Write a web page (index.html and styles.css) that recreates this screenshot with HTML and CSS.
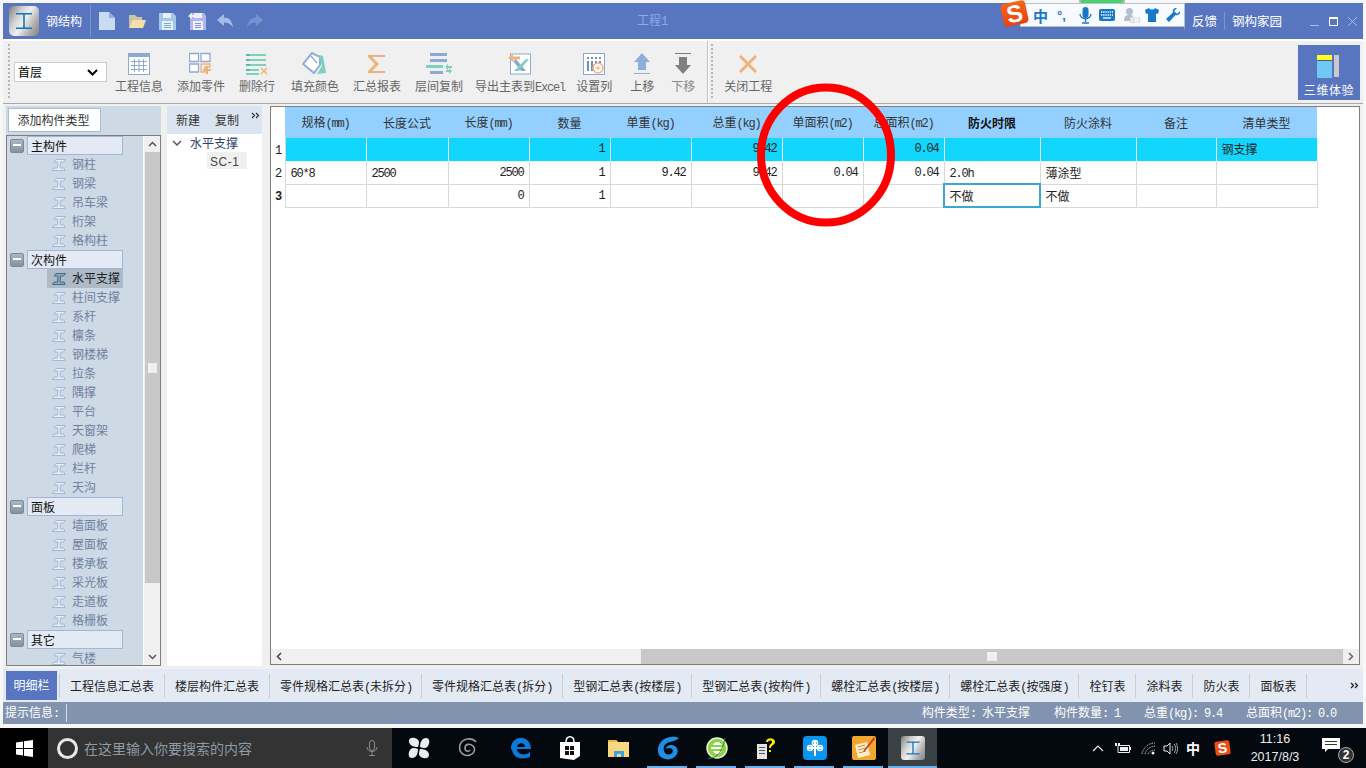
FILE: index.html
```html
<!DOCTYPE html>
<html lang="zh-CN">
<head>
<meta charset="utf-8">
<title>钢结构</title>
<link rel="stylesheet" href="styles.css">
</head>
<body>
<svg class="defs" width="0" height="0">
  <symbol id="beam" viewBox="0 0 14 12">
    <path d="M4 .5h9.500l-2 2.500H8.500l-.5 6H12l1 2.500H.5l1.500-2.500h3.500l.5-6H2z" fill="#e4ecf6" stroke="#a4b8d4" stroke-width="1"/>
  </symbol>
  <symbol id="beamdark" viewBox="0 0 14 12">
    <path d="M4 .5h9.500l-2 2.500H8.500l-.5 6H12l1 2.500H.5l1.500-2.500h3.500l.5-6H2z" fill="#8fa6bb" stroke="#3f6a8c" stroke-width="1"/>
  </symbol>
</svg>

<div class="window">
  <header class="titlebar">
    <div class="tb-left">
      <div class="logo"><svg width="22" height="22" viewBox="0 0 22 22"><path d="M3 3h16v1.500h-7.200v13H19V19H3v-1.500h7.200v-13H3z" fill="#1277bd"/></svg></div>
      <span class="appname">钢结构</span>
      <i class="tb-sep"></i>
      <svg class="qa" width="16" height="18" viewBox="0 0 16 18"><path d="M0 0h10l6 6v12H0z" fill="#c9dcf3"/><path d="M10 0v6h6z" fill="#8fb0de"/></svg>
      <svg class="qa" width="18" height="16" viewBox="0 0 18 16"><path d="M1 2h6l2 2h5v3H4L1 15z" fill="#c9c6a6"/><path d="M4 7h14l-3 8H1z" fill="#f4dfa8"/></svg>
      <svg class="qa" width="17" height="17" viewBox="0 0 17 17"><path d="M0 0h14l3 3v14H0z" fill="#a3c7e8"/><path d="M4 0h8v5H4z" fill="#e6f0fa"/><path d="M3 8h11v9H3z" fill="#e6f0fa"/><path d="M5 10h7v1H5zm0 2h7v1H5zm0 2h7v1H5z" fill="#7fa6d0"/></svg>
      <svg class="qa" width="18" height="17" viewBox="0 0 18 17"><path d="M2 0h14l2 3v14H2z" fill="#b4b4ea"/><path d="M6 0h8v5H6z" fill="#eef0fb"/><path d="M5 8h10v9H5z" fill="#eef0fb"/><path d="M7 10h6v1H7zm0 2h6v1H7zm0 2h6v1H7z" fill="#8d8dd0"/><path d="M0 3l4-3v2h3v2H4v2z" fill="#eef0fb"/></svg>
      <svg class="qa" width="16" height="14" viewBox="0 0 16 14"><path d="M7 0v3.500c5 0 8 3 9 10-2-3.500-5-5-9-5V12L0 6z" fill="#a6bce8"/></svg>
      <svg class="qa" width="16" height="14" viewBox="0 0 16 14"><path d="M9 0v3.500c-5 0-8 3-9 10 2-3.500 5-5 9-5V12l7-6z" fill="#7591d2"/></svg>
    </div>
    <div class="tb-title">工程<span class="l">1</span></div>
    <div class="tb-right">
      <i class="tb-sep2"></i>
      <span class="tb-link">反馈</span>
      <i class="tb-sep2"></i>
      <span class="tb-link">钢构家园</span>
      <div class="winctl">
        <svg width="9" height="9" viewBox="0 0 9 9"><path d="M0 8h9v1H0z" fill="#a8bce8"/></svg>
        <svg width="9" height="9" viewBox="0 0 9 9"><path d="M.5 1.500h8v7h-8z" fill="none" stroke="#fff"/><path d="M0 0h9v2H0z" fill="#fff"/></svg>
        <svg width="9" height="9" viewBox="0 0 9 9"><path d="M0 0l9 9M9 0L0 9" stroke="#a8bce8" stroke-width="1"/></svg>
      </div>
    </div>
  </header>

  <section class="toolbar">
    <i class="grip"></i>
    <div class="floor-select"><span>首层</span><svg width="11" height="7" viewBox="0 0 11 7"><path d="M1 1l4.500 4.500L10 1" fill="none" stroke="#000" stroke-width="2"/></svg></div>
    <div class="tools">
      <div class="tool">
        <svg width="22" height="22" viewBox="0 0 22 22"><rect x=".5" y=".5" width="21" height="21" fill="#fff" stroke="#8ea9d3"/><path d="M1 1h20v3H1z" fill="#8ea9d3"/><path d="M6.500 6v13M11 6v13M15.500 6v13M3 8.500h16M3 12.500h16M3 16.500h16" stroke="#8ea9d3"/></svg>
        <span>工程信息</span>
      </div>
      <div class="tool g14">
        <svg width="24" height="22" viewBox="0 0 24 22"><path d="M.5.500h9v8h-9zM12 .5h9v8h-9zM.5 11h9v8h-9z" fill="#fff" stroke="#8ea9d3" stroke-width="1.300"/><path d="M12 11h9v3h-5v5h-4z" fill="none" stroke="#efb27a" stroke-width="1.300"/><path d="M18 13v8M14 17h8" stroke="#efb27a" stroke-width="2"/></svg>
        <span>添加零件</span>
      </div>
      <div class="tool g14">
        <svg width="22" height="22" viewBox="0 0 22 22"><path d="M0 1h20v2H0zM0 6h20v2H0zM0 11h20v2H0zM0 16h13v2H0zM0 20h13v2H0z" fill="#7dd1bf"/><path d="M0 1h4v2H0zM0 6h4v2H0zM0 11h4v2H0zM0 16h4v2H0z" fill="#5bb8a6"/><path d="M15 15l6 6M21 15l-6 6" stroke="#efb27a" stroke-width="1.500"/></svg>
        <span>删除行</span>
      </div>
      <div class="tool g16">
        <svg width="26" height="24" viewBox="0 0 26 24"><path d="M10 1L1 12l11 9 6-8V5z" fill="#fff" stroke="#92afd8" stroke-width="2"/><path d="M9 4l6 7" stroke="#92afd8" stroke-width="1.500"/><path d="M17 3l4 1 3 17-9 1 5-8z" fill="#7dd1bf"/></svg>
        <span>填充颜色</span>
      </div>
      <div class="tool g14">
        <svg width="20" height="22" viewBox="0 0 20 22"><path d="M1 2h17v2H5l7 7-7 7h13v2H1v-2l7-7-7-7z" fill="#efb27a"/></svg>
        <span>汇总报表</span>
      </div>
      <div class="tool g14">
        <svg width="26" height="22" viewBox="0 0 26 22"><path d="M4 0h17v3H4zM4 6h17v3H4zM4 18h13v3H4z" fill="#8ea9d3"/><path d="M0 12h17v3H0z" fill="#7dd1bf"/><path d="M19 14l3-3v2h4v2h-4v2zM26 18l-3-3v2h-3v2h3v2z" fill="#7dd1bf"/></svg>
        <span>层间复制</span>
      </div>
      <div class="tool g12">
        <svg width="24" height="22" viewBox="0 0 24 22"><rect x="2.500" y="1" width="20" height="20" fill="#fff" stroke="#8ea9d3"/><path d="M8 6l10 12h-5L5 8z" fill="#8ea9d3"/><path d="M18 6h3L11 18H6z" fill="#7dd1bf"/><path d="M0 5l5-4v2.500h7v3H5V9z" fill="#efb27a"/></svg>
        <span>导出主表到<span class="l">Excel</span></span>
      </div>
      <div class="tool g11">
        <svg width="22" height="22" viewBox="0 0 22 22"><rect x=".5" y=".5" width="21" height="21" fill="#fff" stroke="#8ea9d3"/><path d="M4 4h2v2H4zM8 4h2v2H8zM12 4h2v2h-2zM16 4h2v2h-2zM4 8h2v10H4zM8 8h2v10H8zM12 8h2v4h-2zM16 8h2v2h-2z" fill="#6f8fc0"/><circle cx="15" cy="15" r="5" fill="#fff" stroke="#efb27a" stroke-width="1.500"/><path d="M15 12.500v5M12.500 15h5" stroke="#efb27a"/></svg>
        <span>设置列</span>
      </div>
      <div class="tool g18">
        <svg width="18" height="22" viewBox="0 0 18 22"><path d="M9 0l8 9h-4v8H5V9H1zM1 20h16v1H1z" fill="#8eafdb"/></svg>
        <span>上移</span>
      </div>
      <div class="tool g17">
        <svg width="18" height="22" viewBox="0 0 18 22"><path d="M1 0h16v1H1zM5 4h8v8h4l-8 9-8-9h4z" fill="#808080"/></svg>
        <span class="dim">下移</span>
      </div>
      <i class="tool-sep"></i>
      <i class="grip grip2"></i>
      <div class="tool close-tool">
        <svg width="18" height="18" viewBox="0 0 18 18"><path d="M1 1l16 16M17 1L1 17" stroke="#efb27a" stroke-width="3"/></svg>
        <span>关闭工程</span>
      </div>
    </div>
    <div class="btn3d">
      <svg width="24" height="23" viewBox="0 0 24 23"><path d="M0 0h15v5H0z" fill="#ffff1e"/><path d="M0 5h15v1H0z" fill="#4a5a8a"/><path d="M0 6h15v17H0z" fill="#72c8f5"/><path d="M17 0h5v22h-5z" fill="#c9c9c9"/></svg>
      <span>三维体验</span>
    </div>
  </section>

  <main class="main">
    <aside class="left">
      <div class="left-top"><div class="add-type">添加构件类型</div></div>
      <div class="tree">
        <div class="tree-rows">
          <div class="grp"><b class="minus"></b><span class="grp-label">主构件</span></div>
          <div class="it"><svg width="14" height="12"><use href="#beam"/></svg><span>钢柱</span></div>
          <div class="it"><svg width="14" height="12"><use href="#beam"/></svg><span>钢梁</span></div>
          <div class="it"><svg width="14" height="12"><use href="#beam"/></svg><span>吊车梁</span></div>
          <div class="it"><svg width="14" height="12"><use href="#beam"/></svg><span>桁架</span></div>
          <div class="it"><svg width="14" height="12"><use href="#beam"/></svg><span>格构柱</span></div>
          <div class="grp"><b class="minus"></b><span class="grp-label">次构件</span></div>
          <div class="it sel"><svg width="14" height="12"><use href="#beamdark"/></svg><span>水平支撑</span></div>
          <div class="it"><svg width="14" height="12"><use href="#beam"/></svg><span>柱间支撑</span></div>
          <div class="it"><svg width="14" height="12"><use href="#beam"/></svg><span>系杆</span></div>
          <div class="it"><svg width="14" height="12"><use href="#beam"/></svg><span>檩条</span></div>
          <div class="it"><svg width="14" height="12"><use href="#beam"/></svg><span>钢楼梯</span></div>
          <div class="it"><svg width="14" height="12"><use href="#beam"/></svg><span>拉条</span></div>
          <div class="it"><svg width="14" height="12"><use href="#beam"/></svg><span>隅撑</span></div>
          <div class="it"><svg width="14" height="12"><use href="#beam"/></svg><span>平台</span></div>
          <div class="it"><svg width="14" height="12"><use href="#beam"/></svg><span>天窗架</span></div>
          <div class="it"><svg width="14" height="12"><use href="#beam"/></svg><span>爬梯</span></div>
          <div class="it"><svg width="14" height="12"><use href="#beam"/></svg><span>栏杆</span></div>
          <div class="it"><svg width="14" height="12"><use href="#beam"/></svg><span>天沟</span></div>
          <div class="grp"><b class="minus"></b><span class="grp-label">面板</span></div>
          <div class="it"><svg width="14" height="12"><use href="#beam"/></svg><span>墙面板</span></div>
          <div class="it"><svg width="14" height="12"><use href="#beam"/></svg><span>屋面板</span></div>
          <div class="it"><svg width="14" height="12"><use href="#beam"/></svg><span>楼承板</span></div>
          <div class="it"><svg width="14" height="12"><use href="#beam"/></svg><span>采光板</span></div>
          <div class="it"><svg width="14" height="12"><use href="#beam"/></svg><span>走道板</span></div>
          <div class="it"><svg width="14" height="12"><use href="#beam"/></svg><span>格栅板</span></div>
          <div class="grp"><b class="minus"></b><span class="grp-label">其它</span></div>
          <div class="it"><svg width="14" height="12"><use href="#beam"/></svg><span>气楼</span></div>
        </div>
        <div class="vscroll">
          <svg class="arrow" width="9" height="6" viewBox="0 0 9 6"><path d="M1 5l3.500-3.500L8 5" fill="none" stroke="#555" stroke-width="1.500"/></svg>
          <div class="vthumb"><i></i></div>
          <svg class="arrow" width="9" height="6" viewBox="0 0 9 6"><path d="M1 1l3.500 3.500L8 1" fill="none" stroke="#555" stroke-width="1.500"/></svg>
        </div>
      </div>
    </aside>

    <aside class="mid">
      <div class="mid-top"><span>新建</span><span>复制</span><svg width="9" height="7" viewBox="0 0 9 7"><path d="M1 1l2.500 2.500L1 6M5 1l2.500 2.500L5 6" fill="none" stroke="#333" stroke-width="1.200"/></svg></div>
      <div class="mid-tree">
        <div class="mid-root"><svg width="10" height="7" viewBox="0 0 10 7"><path d="M1 1l4 4 4-4" fill="none" stroke="#555" stroke-width="1.500"/></svg><span>水平支撑</span></div>
        <div class="mid-leaf"><span>SC-1</span></div>
      </div>
    </aside>

    <section class="grid-panel">
      <div class="grid-body">
        <table class="grid">
          <colgroup><col class="c0"><col class="c1"><col class="c2"><col class="c3"><col class="c4"><col class="c5"><col class="c6"><col class="c7"><col class="c8"><col class="c9"><col class="c10"><col class="c11"><col class="c12"></colgroup>
          <thead>
            <tr><th class="rh"></th><th>规格<span class="l">(mm)</span></th><th>长度公式</th><th>长度<span class="l">(mm)</span></th><th>数量</th><th>单重<span class="l">(kg)</span></th><th>总重<span class="l">(kg)</span></th><th>单面积<span class="l">(m2)</span></th><th>总面积<span class="l">(m2)</span></th><th class="strong">防火时限</th><th>防火涂料</th><th>备注</th><th>清单类型</th></tr>
          </thead>
          <tbody>
            <tr class="hl"><td class="rh"><span class="l">1</span></td><td></td><td></td><td></td><td class="n">1</td><td></td><td class="n">9.42</td><td></td><td class="n">0.04</td><td></td><td></td><td></td><td>钢支撑</td></tr>
            <tr><td class="rh"><span class="l">2</span></td><td><span class="l">60*8</span></td><td><span class="l">2500</span></td><td class="n">2500</td><td class="n">1</td><td class="n">9.42</td><td class="n">9.42</td><td class="n">0.04</td><td class="n">0.04</td><td><span class="l">2.0h</span></td><td>薄涂型</td><td></td><td></td></tr>
            <tr><td class="rh cur"><span class="l">3</span></td><td></td><td></td><td class="n">0</td><td class="n">1</td><td></td><td></td><td></td><td></td><td class="active">不做</td><td>不做</td><td></td><td></td></tr>
          </tbody>
        </table>
      </div>
      <div class="hscroll">
        <svg class="harrow" width="6" height="9" viewBox="0 0 6 9"><path d="M5 1L1.500 4.500 5 8" fill="none" stroke="#444" stroke-width="1.500"/></svg>
        <div class="htrack"><div class="hthumb"><i></i></div></div>
        <svg class="harrow" width="6" height="9" viewBox="0 0 6 9"><path d="M1 1l3.500 3.500L1 8" fill="none" stroke="#666" stroke-width="1.500"/></svg>
      </div>
    </section>
  </main>

  <nav class="tabs">
    <div class="tab on">明细栏</div>
    <div class="tab">工程信息汇总表</div>
    <div class="tab">楼层构件汇总表</div>
    <div class="tab">零件规格汇总表<span class="l">(</span>未拆分<span class="l">)</span></div>
    <div class="tab">零件规格汇总表<span class="l">(</span>拆分<span class="l">)</span></div>
    <div class="tab">型钢汇总表<span class="l">(</span>按楼层<span class="l">)</span></div>
    <div class="tab">型钢汇总表<span class="l">(</span>按构件<span class="l">)</span></div>
    <div class="tab">螺栓汇总表<span class="l">(</span>按楼层<span class="l">)</span></div>
    <div class="tab">螺栓汇总表<span class="l">(</span>按强度<span class="l">)</span></div>
    <div class="tab">栓钉表</div>
    <div class="tab">涂料表</div>
    <div class="tab">防火表</div>
    <div class="tab">面板表</div>
    <svg class="tabs-more" width="9" height="7" viewBox="0 0 9 7"><path d="M1 1l2.500 2.500L1 6M5 1l2.500 2.500L5 6" fill="none" stroke="#222" stroke-width="1.300"/></svg>
  </nav>

  <footer class="status">
    <span class="hint">提示信息<span class="l">:</span></span>
    <i class="status-sep"></i>
    <div class="status-right">
      <span>构件类型<span class="l">: </span>水平支撑</span>
      <span>构件数量<span class="l">: 1</span></span>
      <span>总重<span class="l">(kg): 9.4</span></span>
      <span>总面积<span class="l">(m2): 0.0</span></span>
    </div>
  </footer>
</div>

<div class="taskbar">
  <div class="start"><svg width="17" height="17" viewBox="0 0 17 17"><path d="M0 2.500l7-1v6.500H0zM8 1.300L17 0v8H8zM0 9h7v6.500l-7-1zM8 9h9v8l-9-1.300z" fill="#fff"/></svg></div>
  <div class="search">
    <i class="ring"></i>
    <span>在这里输入你要搜索的内容</span>
    <svg width="12" height="16" viewBox="0 0 12 16"><rect x="3.500" y=".5" width="5" height="10" rx="2.500" fill="none" stroke="#8a8a8a"/><path d="M1 7c0 6 10 6 10 0M6 12v3M3 15.500h6" fill="none" stroke="#8a8a8a"/></svg>
  </div>
  <div class="apps">
    <div class="app"><svg width="22" height="22" viewBox="0 0 22 22"><path d="M10 10C5 10 1 8 1 4s5-4 8-2 2 5 1 8zM12 10c0-5 2-9 6-9s4 5 2 8-5 2-8 1zM12 12c5 0 9 2 9 6s-5 4-8 2-2-5-1-8zM10 12c0 5-2 9-6 9s-4-5-2-8 5-2 8-1z" fill="#e6eef0"/></svg></div>
    <div class="app"><svg width="22" height="22" viewBox="0 0 22 22"><path d="M19 5C15 0 5 1 3 8c-2 7 4 12 10 10 4-1 6-6 3-9s-8-2-8 2 4 4 5 2" fill="none" stroke="#9a9a9a" stroke-width="1.600"/></svg></div>
    <div class="app"><svg width="22" height="22" viewBox="0 0 22 22"><path d="M1 10C2 3 8 0 13 1c5 1 8 6 8 11H7c0 6 9 7 13 3v5c-5 2-12 2-15-1-2-2-3-5-3-7-1 1-1 1-1-2zm6 0h8c0-5-7-5-8 0z" fill="#0c78d7"/></svg></div>
    <div class="app"><svg width="22" height="24" viewBox="0 0 22 24"><path d="M1 6h20v14l-6 4-14-2z" fill="#fff"/><path d="M7 6c0-7 8-7 8 0" fill="none" stroke="#fff" stroke-width="1.500"/><path d="M6 10h4v4H6zM11 10h4v4h-4zM6 15h4v4H6zM11 15h4v4h-4z" fill="#111"/></svg></div>
    <div class="app"><svg width="22" height="20" viewBox="0 0 22 20"><path d="M0 2h8l2 2h11v15H0z" fill="#f7d87e"/><path d="M0 2h8l2 2H0z" fill="#e8b949"/><path d="M6 13h10v6h-3v-3H9v3H6z" fill="#3ba4e4"/></svg></div>
    <div class="app u"><svg width="24" height="24" viewBox="0 0 24 24"><path d="M23 2c-4-2-11-2-16 2C1 9 0 17 5 21c5 4 13 3 16-3 2-5-1-9-6-9-3 0-5 2-5 4 3-2 7-1 7 2s-5 5-8 2c-3-4-1-10 5-11 3-1 6-1 9-4z" fill="#1e8fe6"/></svg></div>
    <div class="app u"><svg width="24" height="24" viewBox="0 0 24 24"><circle cx="12" cy="12" r="10" fill="#8bd24a"/><circle cx="12" cy="12" r="10" fill="none" stroke="#e8f6d6" stroke-width="1.500"/><path d="M6 11h12v2H6zM12 6c3 0 5 2 5 3H8c0-1 2-3 4-3zM8 15h9c-1 2-3 3-5 3s-3-1-4-3z" fill="#fff"/><path d="M3 22c5 1 14-2 17-20" fill="none" stroke="#3a8a22"/></svg></div>
    <div class="app u"><svg width="20" height="22" viewBox="0 0 20 22"><path d="M1 7h10v15H1z" fill="#e4e4e4"/><path d="M3 10h6v1H3zm0 3h6v1H3zm0 3h6v1H3z" fill="#555"/><path d="M10 5c0-5 9-5 9 0 0 3-4 3-4 6h-2c0-4 3-4 3-6s-3-2-4 0zM13 13h2v2h-2z" fill="#ffec00"/></svg></div>
    <div class="app u"><div class="blue-app"><svg width="18" height="18" viewBox="0 0 18 18"><path d="M9 1v16M1 9h16" stroke="#fff" stroke-width="2"/><circle cx="9" cy="4" r="2.500" fill="none" stroke="#fff" stroke-width="1.500"/><circle cx="4" cy="9" r="2.500" fill="none" stroke="#fff" stroke-width="1.500"/><circle cx="14" cy="9" r="2.500" fill="none" stroke="#fff" stroke-width="1.500"/></svg></div></div>
    <div class="app u"><svg width="24" height="24" viewBox="0 0 24 24"><rect width="24" height="24" rx="2" fill="#f0a92e"/><path d="M3 9l12-3 3 13-12 3z" fill="#fbeecf"/><path d="M6 11l7-2M6.500 14l7-2M7 17l7-2" stroke="#c98a2a"/><path d="M22 1L12 14l-1 2 2-1L23 3z" fill="#c0392b"/></svg></div>
    <div class="app u cur-app"><div class="logo small"><svg width="18" height="18" viewBox="0 0 22 22"><path d="M3 3h16v1.500h-7.200v13H19V19H3v-1.500h7.200v-13H3z" fill="#1277bd"/></svg></div></div>
  </div>
  <div class="tray">
    <div class="t w22"><svg width="12" height="7" viewBox="0 0 12 7"><path d="M1 6l5-5 5 5" fill="none" stroke="#eee" stroke-width="1.200"/></svg></div>
    <div class="t w28"><svg width="16" height="11" viewBox="0 0 16 11"><path d="M3 2.500h11.500v7H3z" fill="none" stroke="#eee"/><path d="M5 4h8v4H5zM0 0h2v3H0zM3 0h2v2H3z" fill="#eee"/><path d="M15 4h1v3h-1z" fill="#eee"/></svg></div>
    <div class="t w22"><svg width="15" height="13" viewBox="0 0 15 13"><path d="M1 12C2 6 7 1 14 1M4 12c1-4 4-7 10-8M7 12c1-2 3-4 7-4" fill="none" stroke="#bbb" stroke-dasharray="1.500 1"/><circle cx="12" cy="11" r="1.500" fill="#eee"/></svg></div>
    <div class="t w22"><svg width="15" height="13" viewBox="0 0 15 13"><path d="M1 4h3l3-3v11L4 9H1z" fill="none" stroke="#eee"/><path d="M9 4c1 1 1 4 0 5M11 2c2 2 2 7 0 9M13 1c2 3 2 8 0 11" fill="none" stroke="#aaa"/></svg></div>
    <div class="t w24 ime">中</div>
    <div class="t w34"><span class="sg sg-small">S</span></div>
    <div class="clock"><span>11:16</span><span>2017/8/3</span></div>
    <div class="t w46 notif"><svg width="18" height="14" viewBox="0 0 18 14"><path d="M0 0h18v11H6l-3 3v-3H0z" fill="#fff"/><path d="M3 3h12v1H3zm0 3h12v1H3z" fill="#333"/></svg><b>2</b></div>
  </div>
</div>

<div class="ime-green"></div>
<div class="ime-bar">
  <span class="ime-zh">中</span>
  <span class="ime-punc">°,</span>
  <svg width="13" height="17" viewBox="0 0 13 17"><rect x="3.500" y="0" width="6" height="11" rx="3" fill="#1878c8"/><path d="M1 7c0 6 11 6 11 0M6.500 12v3M3 16h7" fill="none" stroke="#1878c8" stroke-width="1.400"/></svg>
  <svg width="16" height="12" viewBox="0 0 16 12"><rect width="16" height="12" rx="2" fill="#1878c8"/><path d="M2 3h12M2 6h12" stroke="#fff" stroke-width="1.300" stroke-dasharray="1.300 .9"/><path d="M4 9h8" stroke="#fff" stroke-width="1.300"/></svg>
  <svg width="16" height="15" viewBox="0 0 16 15"><circle cx="5.500" cy="3.500" r="3.500" fill="#b3bfca"/><path d="M0 13c0-5 2-6 5.500-6S9 8 9 9v4z" fill="#b3bfca"/><rect x="6" y="9" width="10" height="6" fill="#d7dee4"/><path d="M8 10v4M10 10h4v4h-3v-2h3" fill="none" stroke="#fff"/></svg>
  <svg width="14" height="14" viewBox="0 0 14 14"><path d="M4 0L0 2l1 4 2-.5V14h8V5.500l2 .5 1-4-4-2c-1 2-5 2-6 0z" fill="#1878c8"/></svg>
  <svg width="14" height="14" viewBox="0 0 14 14"><path d="M14 3L11 6 8 3l3-3c-3-.5-5 2-4 4.500L0 11l3 3 6.500-7C12 8 14.500 6 14 3z" fill="#1878c8"/></svg>
</div>
<span class="sg sg-big">S</span>

<svg class="red-ring" width="160" height="160" viewBox="0 0 160 160"><ellipse cx="80" cy="80" rx="65" ry="67.500" fill="none" stroke="#fe0000" stroke-width="8"/></svg>
</body>
</html>
```

FILE: styles.css
```css
* { box-sizing: border-box; }
html, body { margin: 0; padding: 0; }
body {
  position: relative;
  width: 1366px;
  height: 768px;
  overflow: hidden;
  background: #f7f7f7;
  font-family: "Noto Sans CJK SC", sans-serif;
  font-size: 12px;
  line-height: 1;
  color: #222;
}
i { display: block; font-style: normal; }
.defs { position: absolute; }
.l { font-family: "Liberation Mono", monospace; font-size: 12px; letter-spacing: -1.2px; }

.window {
  width: 1360px;
  height: 721px;
  margin: 3px 3px 0;
  display: flex;
  flex-direction: column;
  background: #f0f0f0;
}

/* title bar */
.titlebar {
  height: 36px;
  flex: none;
  display: flex;
  align-items: center;
  background: #5876bf;
  color: #fff;
}
.tb-left { display: flex; align-items: center; flex: none; width: 275px; padding-left: 6px; }
.logo {
  width: 30px;
  height: 30px;
  flex: none;
  border-radius: 5px;
  display: flex;
  align-items: center;
  justify-content: center;
  background: linear-gradient(120deg, #7d7d7d 0%, #d0d0d0 30%, #f0f0f0 50%, #b0b0b0 75%, #808080 100%);
}
.logo.small { width: 24px; height: 24px; border-radius: 3px; }
.appname { margin-left: 7px; width: 36px; flex: none; white-space: nowrap; }
.tb-sep { width: 1px; height: 32px; flex: none; margin: 0 8px; background: #7c94cf; }
.qa { flex: none; margin-right: 13px; }
.qa:nth-of-type(3) { margin-right: 12px; }
.qa:nth-of-type(4) { margin-right: 11px; }
.qa:nth-of-type(5) { margin-right: 14px; }
.qa:nth-of-type(6) { margin-right: 14px; }
.tb-title { margin-left: 359px; color: #8fa8e6; width: 40px; white-space: nowrap; }
.tb-right { margin-left: auto; display: flex; align-items: center; height: 100%; }
.tb-sep2 { width: 1px; height: 18px; background: #7c94cf; }
.tb-link { margin: 0 7px 0 7px; font-size: 12.500px; }
.winctl { display: flex; align-items: center; gap: 10px; margin: 0 6px 0 21px; }

/* toolbar */
.toolbar {
  position: relative;
  height: 65px;
  flex: none;
  display: flex;
  border-top: 2px solid #fff;
  border-bottom: 1px solid #aaa;
  background: #f0f0f0;
  padding-left: 5px;
}
.grip {
  width: 2px;
  height: 54px;
  margin: 3px 0 0 0;
  background: repeating-linear-gradient(to bottom, #b5b5b5 0 2px, transparent 2px 4px);
}
.floor-select {
  width: 93px;
  height: 20px;
  margin: 21px 0 0 4px;
  padding: 0 8px 0 3px;
  display: flex;
  align-items: center;
  justify-content: space-between;
  background: #fff;
  border: 1px solid #ccc;
  color: #000;
}
.tools { display: flex; margin-left: 8px; padding-top: 11px; }
.tool { display: flex; flex-direction: column; align-items: center; height: 42px; color: #666; white-space: nowrap; }
.tool svg { height: 24px; flex: none; }
.tool > span { display: block; line-height: 14px; margin-top: 3px; }
.tool .dim { color: #888; }
.g11 { margin-left: 11px; }
.g12 { margin-left: 12px; }
.g14 { margin-left: 14px; }
.g16 { margin-left: 16px; }
.g17 { margin-left: 17px; }
.g18 { margin-left: 18px; }
.tool-sep { width: 2px; height: 62px; margin: -11px 0 0 12px; background: #c4c4c4; border-right: 1px solid #fff; }
.grip2 { margin: -8px 0 0 2px; }
.close-tool { margin-left: 11px; }
.btn3d {
  margin: 4px 3px 0 auto;
  width: 62px;
  height: 55px;
  background: #5876bf;
  color: #fff;
  display: flex;
  flex-direction: column;
  align-items: center;
  padding-top: 10px;
  font-size: 12px;
  letter-spacing: .6px;
  white-space: nowrap;
}
.btn3d span { margin-top: 5px; line-height: 14px; }

/* main */
.main {
  flex: none;
  height: 565px;
  display: flex;
  padding: 2px 0 0 3px;
}
.left { width: 155px; height: 560px; display: flex; flex-direction: column; }
.left-top { height: 29px; padding: 2px; background: #cdd9e5; flex: none; }
.add-type {
  width: 93px;
  height: 24px;
  line-height: 22px;
  padding-right: 2px;
  text-align: center;
  background: #fff;
  border: 1px solid #a9bcdc;
  color: #333;
}
.tree {
  flex: 1;
  min-height: 0;
  display: flex;
  border: 1px solid #7f7f7f;
  background: #cdd9e5;
  overflow: hidden;
}
.tree-rows { flex: 1; min-width: 0; overflow: hidden; }
.grp { height: 19px; display: flex; align-items: center; padding-left: 3px; }
.minus {
  display: block;
  width: 14px;
  height: 14px;
  flex: none;
  border-radius: 2px;
  background: linear-gradient(#aab6c2, #84929f);
  border: 1px solid #7d8a96;
  position: relative;
}
.minus::after {
  content: "";
  position: absolute;
  left: 2px;
  right: 2px;
  top: 4px;
  height: 2px;
  background: #fff;
}
.grp-label {
  width: 96px;
  height: 19px;
  margin-left: 3px;
  padding-left: 3px;
  line-height: 17px;
  background: #e4eaf4;
  border: 1px solid #a3b5d8;
  color: #111;
}
.it { height: 19px; width: 116px; display: flex; align-items: center; padding-left: 45px; color: #70819f; }
.it svg { flex: none; }
.it span { margin: -2px 0 0 6px; white-space: nowrap; }
.it.sel { margin-left: 40px; width: 76px; padding-left: 5px; background: #aebac6; color: #1c2228; }
.vscroll {
  width: 17px;
  flex: none;
  border-left: 1px solid #fff;
  background: #f0f0f0;
  display: flex;
  flex-direction: column;
  align-items: center;
}
.vscroll .arrow { margin: 5px 0; flex: none; }
.vthumb {
  width: 15px;
  height: 431px;
  margin-bottom: auto;
  background: #c8c8c8;
  display: flex;
  align-items: center;
  justify-content: center;
}
.vthumb i { width: 9px; height: 10px; background: #f0f0f0; }

.mid { width: 95px; height: 560px; margin-left: 6px; background: #fff; display: flex; flex-direction: column; }
.mid-top {
  height: 28px;
  flex: none;
  background: #dbe5f1;
  display: flex;
  padding: 7px 0 0 9px;
  color: #333;
}
.mid-top span { line-height: 14px; }
.mid-top span + span { margin-left: 15px; }
.mid-top svg { margin: 0 0 0 12px; position: relative; top: -1px; }
.mid-root { display: flex; align-items: center; height: 18px; padding-left: 5px; }
.mid-root span { margin-left: 8px; color: #2a3f66; }
.mid-leaf { margin-left: 40px; width: 40px; height: 17px; padding-left: 3px; background: #f0f0f0; line-height: 17px; color: #444; }
.mid-leaf span { font-family: "Liberation Sans", sans-serif; font-size: 12px; letter-spacing: .5px; }

.grid-panel {
  width: 1090px;
  height: 559px;
  margin-left: 8px;
  display: flex;
  flex-direction: column;
  background: #fff;
  border: 1px solid #7f7f7f;
}
.grid-body { flex: 1; min-height: 0; overflow: hidden; }
.grid {
  table-layout: fixed;
  width: 1046px;
  border-collapse: collapse;
  color: #222;
}
.c0 { width: 14px; }
.c1, .c3, .c4, .c5, .c7, .c8 { width: 81px; }
.c2 { width: 82px; }
.c6 { width: 91px; }
.c9, .c10 { width: 96px; }
.c11 { width: 80px; }
.c12 { width: 101px; }
.grid th {
  height: 31px;
  padding: 0;
  background: #93d0ff;
  font-weight: 400;
  text-align: center;
  color: #333;
  white-space: nowrap;
}
.grid th.rh { background: #fff; }
.grid th.strong { font-weight: 700; color: #111; }
.grid td {
  height: 23px;
  padding: 0 5px;
  border: 1px solid #d8d8d8;
  white-space: nowrap;
}
.grid tbody tr:first-child td { border-top: 0; }
.grid td.rh { padding: 0 0 0 4px; border: 0; border-right: 1px solid #d8d8d8; background: #fff; }
.grid td.rh.cur { font-weight: 700; }
.grid td.n { text-align: right; font-family: "Liberation Mono", monospace; font-size: 12px; letter-spacing: -1.2px; }
.hl td { background: #12d6fb; border-color: #e6f6fc; }
.hl td.rh { background: #fff; }
.grid td.active { outline: 2px solid #3da6d2; outline-offset: -1px; }

.hscroll { height: 15px; flex: none; display: flex; align-items: center; background: #f0f0f0; }
.harrow { flex: none; margin: 0 5px; }
.htrack { flex: 1; height: 100%; display: flex; justify-content: flex-end; }
.hthumb {
  width: 702px;
  height: 15px;
  background: #c8c8c8;
  display: flex;
  align-items: center;
  justify-content: center;
}
.hthumb i { width: 10px; height: 9px; background: #f0f0f0; }

/* tabs */
.tabs {
  height: 33px;
  flex: none;
  display: flex;
  align-items: center;
  padding-left: 3px;
  background: #e4eaf4;
  color: #222;
}
.tab {
  height: 24px;
  line-height: 23px;
  padding: 0 10px;
  border-right: 1px solid #ccc;
  white-space: nowrap;
}
.tab.on {
  width: 51px;
  height: 29px;
  line-height: 28px;
  padding: 0;
  margin-right: 2px;
  text-align: center;
  background: #5876bf;
  color: #fff;
  border: 0;
}
.tab:nth-child(2) { border-left: 1px solid #ccc; }
.tab:nth-child(4) { padding-right: 9px; }
.tabs-more { margin-left: auto; margin-right: 4px; }

/* status */
.status {
  height: 22px;
  flex: none;
  display: flex;
  align-items: center;
  background: #8193af;
  color: #fff;
  padding-left: 2px;
}
.hint { width: 61px; white-space: nowrap; }
.status-sep { width: 1px; height: 18px; background: #d7dee8; }
.status-right { margin-left: auto; display: flex; gap: 24px; margin-right: 27px; white-space: nowrap; }

/* taskbar */
.taskbar {
  height: 40px;
  margin-top: 4px;
  display: flex;
  align-items: stretch;
  background: #03090e;
  color: #fff;
}
.start { width: 48px; flex: none; background: #000; display: flex; align-items: center; justify-content: center; }
.search {
  width: 344px;
  flex: none;
  background: #333;
  display: flex;
  align-items: center;
  padding: 0 14px 0 9px;
  color: #8f9aa4;
  font-size: 14px;
}
.search span { margin-left: 6px; }
.search svg { margin-left: auto; }
.ring { width: 21px; height: 21px; border-radius: 50%; border: 3px solid #e8e8e8; }
.apps { display: flex; margin-left: 2px; }
.app { width: 49px; display: flex; align-items: center; justify-content: center; position: relative; }
.app:nth-child(3) { margin-left: 4px; }
.app.u::after {
  content: "";
  position: absolute;
  left: 4px;
  right: 5px;
  bottom: 0;
  height: 2px;
  background: #66b0ee;
}
.app.cur-app { background: #3a4144; }
.app.cur-app::after { left: 0; right: 0; }
.blue-app { width: 24px; height: 24px; border-radius: 4px; background: #0a96ee; display: flex; align-items: center; justify-content: center; }
.tray { margin-left: auto; margin-right: 9px; display: flex; align-items: center; }
.t { display: flex; align-items: center; justify-content: center; height: 100%; position: relative; }
.w22 { width: 22px; }
.w24 { width: 24px; }
.w28 { width: 28px; }
.w34 { width: 34px; }
.w46 { width: 46px; }
.ime { font-size: 14px; font-weight: 700; }
.clock {
  width: 72px;
  display: flex;
  flex-direction: column;
  align-items: center;
  gap: 5px;
  font-family: "Liberation Sans", sans-serif;
  font-size: 12.500px;
  color: #eee;
}
.notif b {
  position: absolute;
  left: 27px;
  top: 19px;
  width: 16px;
  height: 16px;
  line-height: 14px;
  border-radius: 50%;
  border: 1px solid #aaa;
  background: #333;
  text-align: center;
  font-family: "Liberation Sans", sans-serif;
  font-size: 12px;
}
.notif svg { position: relative; top: -3px; left: -3px; }

/* sogou */
.sg {
  display: block;
  background: #ee4e14;
  color: #fff;
  font-family: "Liberation Sans", sans-serif;
  font-weight: 700;
  text-align: center;
}
.sg-small { width: 15px; height: 14px; border-radius: 2px; line-height: 14px; font-size: 14px; transform: rotate(-8deg); }
.sg-big {
  position: absolute;
  left: 1002px;
  top: 2px;
  width: 25px;
  height: 23px;
  border-radius: 4px;
  line-height: 23px;
  font-size: 24px;
  transform: rotate(-12deg);
  background: linear-gradient(#f4661c, #e8420f);
}
.ime-bar {
  position: absolute;
  left: 1020px;
  top: 3px;
  width: 165px;
  height: 24px;
  padding-left: 12px;
  display: flex;
  align-items: center;
  background: #f7fafe;
  border: 1px solid #b8c2cc;
  color: #1878c8;
}
.ime-zh { font-size: 15px; font-weight: 700; width: 24px; flex: none; }
.ime-punc { font-size: 13px; font-weight: 700; width: 22px; flex: none; font-family: "Liberation Sans", sans-serif; }
.ime-bar svg { margin-right: 7px; flex: none; }
.ime-bar svg:nth-of-type(2) { margin-right: 9px; }
.ime-bar svg:nth-of-type(3) { margin-right: 5px; }
.ime-bar svg:nth-of-type(4) { margin-right: 7px; }
.ime-green {
  position: absolute;
  left: 1079px;
  top: 0;
  width: 46px;
  height: 3px;
  background: #4cd26a;
  border: 1px solid #bbb;
  border-width: 0 2px;
}
.red-ring { position: absolute; left: 746px; top: 74.500px; }
```
